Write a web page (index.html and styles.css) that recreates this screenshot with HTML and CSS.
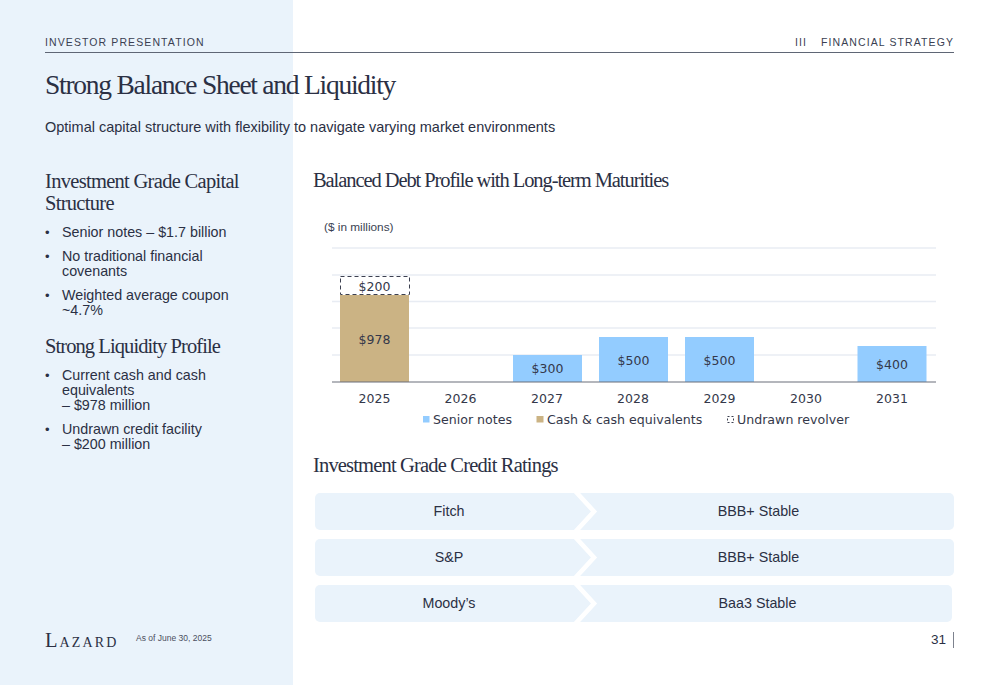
FILE: index.html
```html
<!DOCTYPE html>
<html lang="en">
<head>
<meta charset="utf-8">
<title>Strong Balance Sheet and Liquidity</title>
<link rel="stylesheet" href="styles.css">
</head>
<body>
<div class="page">
  <header class="topbar">
    <span>INVESTOR PRESENTATION</span>
    <span class="section"><span class="numeral">III</span>FINANCIAL STRATEGY</span>
  </header>
  <h1 class="title">Strong Balance Sheet and Liquidity</h1>
  <p class="subtitle">Optimal capital structure with flexibility to navigate varying market environments</p>
  <main class="columns">
    <aside class="side">
      <h2 class="side-heading">Investment Grade Capital Structure</h2>
      <ul class="bullets">
        <li>Senior notes – $1.7 billion</li>
        <li>No traditional financial<br>covenants</li>
        <li>Weighted average coupon<br>~4.7%</li>
      </ul>
      <h2 class="side-heading second">Strong Liquidity Profile</h2>
      <ul class="bullets">
        <li>Current cash and cash<br>equivalents<br>– $978 million</li>
        <li>Undrawn credit facility<br>– $200 million</li>
      </ul>
    </aside>
    <section class="content">
      <h2 class="content-heading">Balanced Debt Profile with Long-term Maturities</h2>
      <svg class="chart" width="642" height="225" viewBox="312 210 642 225" role="img" aria-label="Debt maturity chart">
        <text class="unit" x="324" y="231">($ in millions)</text>
        <g class="grid">
          <line x1="332" x2="936" y1="248" y2="248"/>
          <line x1="332" x2="936" y1="275" y2="275"/>
          <line x1="332" x2="936" y1="301.5" y2="301.5"/>
          <line x1="332" x2="936" y1="328" y2="328"/>
          <line x1="332" x2="936" y1="355" y2="355"/>
        </g>
        <rect class="cash" x="340" y="295" width="69" height="87"/>
        <rect class="undrawn" x="340.5" y="276.5" width="69" height="18"/>
        <rect class="senior" x="513" y="355" width="69" height="27"/>
        <rect class="senior" x="599" y="337" width="69" height="45"/>
        <rect class="senior" x="685" y="337" width="69" height="45"/>
        <rect class="senior" x="857.5" y="346" width="69" height="36"/>
        <line class="axis" x1="332" x2="936" y1="382" y2="382"/>
        <g class="label">
          <text x="374.5" y="291">$200</text>
          <text x="374.5" y="344">$978</text>
          <text x="547.5" y="373">$300</text>
          <text x="633.5" y="364.5">$500</text>
          <text x="719.5" y="364.5">$500</text>
          <text x="892" y="369">$400</text>
        </g>
        <g class="label">
          <text x="374.5" y="402.5">2025</text>
          <text x="460.5" y="402.5">2026</text>
          <text x="547" y="402.5">2027</text>
          <text x="633" y="402.5">2028</text>
          <text x="719.5" y="402.5">2029</text>
          <text x="806" y="402.5">2030</text>
          <text x="892" y="402.5">2031</text>
        </g>
        <rect class="senior" x="423" y="416" width="6.5" height="6.5"/>
        <text class="legend" x="433" y="423.5">Senior notes</text>
        <rect class="cash" x="536.5" y="416" width="7" height="6.5"/>
        <text class="legend" x="547" y="423.5">Cash &amp; cash equivalents</text>
        <rect class="swatch" x="727.5" y="416.5" width="6" height="6"/>
        <text class="legend" x="737" y="423.5">Undrawn revolver</text>
      </svg>
      <h2 class="content-heading ratings-heading">Investment Grade Credit Ratings</h2>
      <div class="ratings">
        <div class="rating">
          <span class="agency">Fitch</span><span class="grade">BBB+ Stable</span>
          <svg class="chevron" width="30" height="37" viewBox="0 0 30 37"><polyline points="1.25,-3 21,18.5 1.25,40"/></svg>
        </div>
        <div class="rating">
          <span class="agency">S&amp;P</span><span class="grade">BBB+ Stable</span>
          <svg class="chevron" width="30" height="37" viewBox="0 0 30 37"><polyline points="1.25,-3 21,18.5 1.25,40"/></svg>
        </div>
        <div class="rating short">
          <span class="agency">Moody’s</span><span class="grade">Baa3 Stable</span>
          <svg class="chevron" width="30" height="37" viewBox="0 0 30 37"><polyline points="1.25,-3 21,18.5 1.25,40"/></svg>
        </div>
      </div>
    </section>
  </main>
  <footer class="footer">
    <span class="logo">Lazard</span>
    <span class="note">As of June 30, 2025</span>
    <span class="pageno">31</span>
  </footer>
</div>
</body>
</html>
```
FILE: styles.css
```css
* { box-sizing: border-box; }
html, body { margin: 0; padding: 0; }
body {
  width: 1000px;
  height: 685px;
  overflow: hidden;
  font-family: "Liberation Sans", Arial, sans-serif;
  color: #2b3044;
  background: linear-gradient(to right, #eaf3fb 293px, #ffffff 293px);
}
.page { display: flex; flex-direction: column; height: 685px; padding: 0 46px 0 45px; }
.topbar {
  display: flex;
  justify-content: space-between;
  align-items: flex-end;
  height: 53px;
  padding-bottom: 4px;
  border-bottom: 1px solid #5f6675;
  font-size: 10.5px;
  letter-spacing: 1.1px;
  color: #3a3f52;
}
.numeral { margin-right: 14px; }
.title {
  margin: 16px 0 0;
  font: 400 27.5px/32px "Liberation Serif", serif;
  letter-spacing: -1.25px;
  color: #2b3044;
}
.subtitle { margin: 17px 0 0; font-size: 14.5px; line-height: 18px; }
.columns { display: flex; margin-top: 34px; }
.side { width: 268px; flex: none; }
.side-heading {
  margin: 0;
  width: 210px;
  font: 400 20.5px/22px "Liberation Serif", serif;
  letter-spacing: -0.7px;
}
.side-heading.second { margin-top: 17px; letter-spacing: -0.92px; }
.bullets { margin: 11px 0 0; padding: 0 0 0 17px; list-style: none; font-size: 14.3px; line-height: 15px; }
.bullets li { position: relative; margin-bottom: 9px; }
.bullets li::before { content: "•"; position: absolute; left: -17px; font-size: 13px; }
.content { width: 641px; margin-top: -2px; }
.content-heading {
  margin: 0;
  font: 400 20.5px/24px "Liberation Serif", serif;
  letter-spacing: -1.08px;
}
.chart { display: block; margin: 18px 0 0 -1px; }
.unit { font: 11.8px "Liberation Sans", sans-serif; fill: #3a3f52; }
.grid line { stroke: #e8ecf3; stroke-width: 1.3; }
.axis { stroke: #6b6f7b; stroke-width: 1.2; }
.cash { fill: #cbb384; }
.senior { fill: #93ccff; }
.undrawn { fill: #ffffff; stroke: #3c4050; stroke-width: 1; stroke-dasharray: 4 3; }
.swatch { fill: #ffffff; stroke: #3c4050; stroke-width: 1; stroke-dasharray: 2 2; }
.label text { font: 12.5px "DejaVu Sans", sans-serif; fill: #34384a; text-anchor: middle; }
.legend { font: 12.6px "DejaVu Sans", sans-serif; fill: #34384a; }
.content-heading.ratings-heading { margin-top: 18px; letter-spacing: -0.83px; }
.ratings { display: flex; flex-direction: column; gap: 9px; margin-top: 16px; padding-left: 2px; }
.rating {
  position: relative;
  display: flex;
  align-items: center;
  height: 37px;
  padding-bottom: 2px;
  border-radius: 5px;
  background: #eaf3fb;
  font-size: 14.3px;
}
.rating.short { width: 637px; }
.agency { width: 268px; text-align: center; }
.grade { flex: 1; padding-right: 20px; text-align: center; }
.chevron { position: absolute; left: 258px; top: 0; }
.chevron polyline { fill: none; stroke: #ffffff; stroke-width: 4.6; }
.footer { display: flex; align-items: center; height: 20px; margin-top: auto; margin-bottom: 35px; }
.logo { width: 91px; font: 400 20.5px "Liberation Serif", serif; font-variant: small-caps; letter-spacing: 2.1px; color: #2b3044; }
.note { font-size: 8.5px; color: #4a4f60; position: relative; top: -2px; }
.pageno { margin-left: auto; padding-right: 7px; border-right: 1px solid #7d828e; font-size: 13.5px; line-height: 16px; }
```
